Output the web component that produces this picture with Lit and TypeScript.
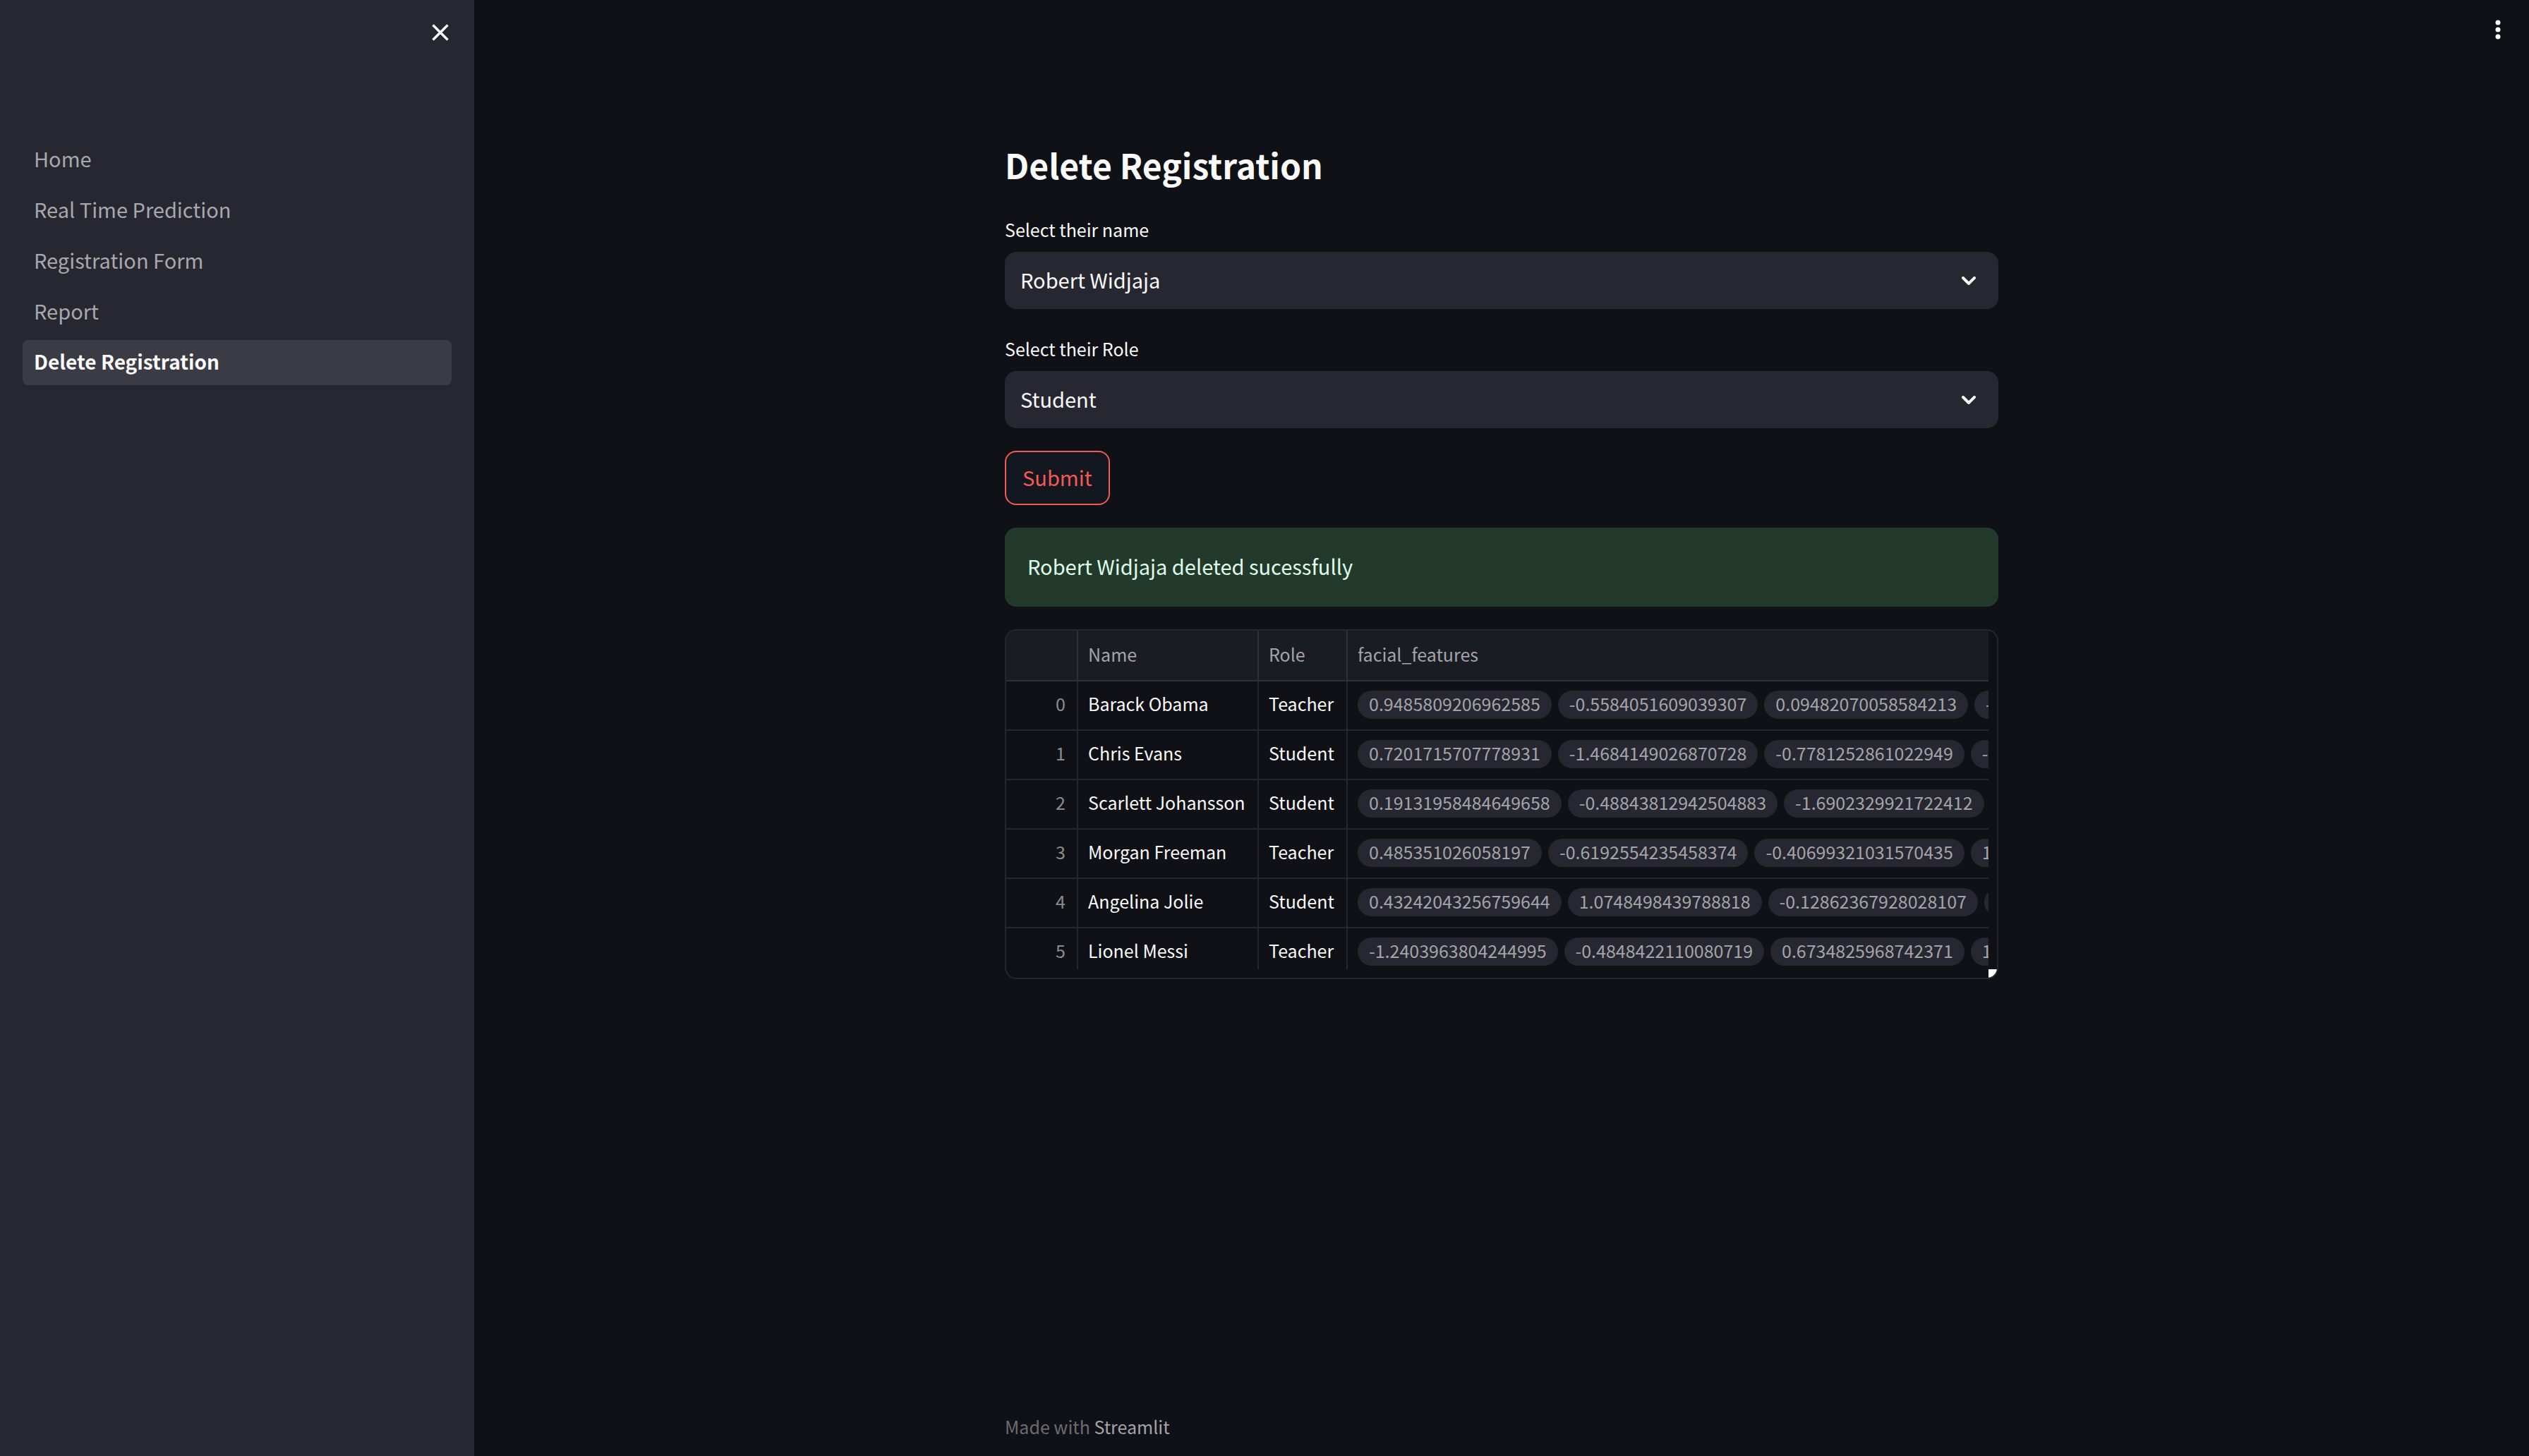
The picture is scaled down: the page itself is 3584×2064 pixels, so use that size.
import { LitElement, html, css, svg } from "lit";
import { customElement, state } from "lit/decorators.js";

interface Person {
  name: string;
  role: string;
  features: string[];
}

const PAGES = ["Home", "Real Time Prediction", "Registration Form", "Report", "Delete Registration"];

const PEOPLE: Person[] = [
  { name: "Barack Obama", role: "Teacher", features: ["0.9485809206962585", "-0.5584051609039307", "0.09482070058584213", "-"] },
  { name: "Chris Evans", role: "Student", features: ["0.7201715707778931", "-1.4684149026870728", "-0.7781252861022949", "-"] },
  { name: "Scarlett Johansson", role: "Student", features: ["0.19131958484649658", "-0.48843812942504883", "-1.6902329921722412"] },
  { name: "Morgan Freeman", role: "Teacher", features: ["0.485351026058197", "-0.6192554235458374", "-0.40699321031570435", "1"] },
  { name: "Angelina Jolie", role: "Student", features: ["0.43242043256759644", "1.0748498439788818", "-0.12862367928028107", ""] },
  { name: "Lionel Messi", role: "Teacher", features: ["-1.2403963804244995", "-0.4848422110080719", "0.6734825968742371", "1"] },
];

const chevron = svg`<path d="M2 2 L10 10 L18 2" fill="none" stroke="currentColor" stroke-width="4" stroke-linecap="round" stroke-linejoin="round"/>`;

@customElement("app-sidebar")
export class AppSidebar extends LitElement {
  static styles = css`
    :host {
      display: block;
      background: #262730;
    }
    .top {
      display: flex;
      justify-content: flex-end;
      padding: 30px 32px 132px;
    }
    .close {
      display: flex;
      padding: 0;
      border: 0;
      background: none;
      color: #fafafa;
      cursor: pointer;
    }
    .list {
      display: flex;
      flex-direction: column;
      gap: 8px;
      margin: 0;
      padding: 0 32px;
      list-style: none;
    }
    .link {
      display: block;
      padding: 0 16px 4px;
      border-radius: 8px;
      line-height: 60px;
      color: #a8a8ac;
      text-decoration: none;
      white-space: nowrap;
    }
    .link.active {
      background: #3b3b45;
      color: #fafafa;
      font-size: 28px;
      font-weight: 700;
    }
  `;

  render() {
    return html`
      <div class="top">
        <button class="close" aria-label="Close sidebar">
          <svg width="32" height="32" viewBox="0 0 32 32">
            <path d="M5.500 5.500 L26.500 26.500 M26.500 5.500 L5.500 26.500" fill="none" stroke="currentColor" stroke-width="3.500" />
          </svg>
        </button>
      </div>
      <nav aria-label="Pages">
        <ul class="list">
          ${PAGES.map(
            (page, i) => html`<li>
              <a class="link ${i === PAGES.length - 1 ? "active" : ""}" href="#">${page}</a>
            </li>`
          )}
        </ul>
      </nav>
    `;
  }
}

@customElement("app-select")
export class AppSelect extends LitElement {
  static properties = { label: {}, options: { attribute: false } };
  declare label: string;
  declare options: string[];

  static styles = css`
    :host {
      display: flex;
      flex-direction: column;
      gap: 8px;
    }
    .label {
      font-size: 25px;
      line-height: 48px;
    }
    .field {
      display: grid;
      align-items: center;
      border-radius: 16px;
      background: #262730;
    }
    .select {
      grid-area: 1 / 1;
      width: 100%;
      height: 81px;
      padding: 0 80px 4px 22px;
      border: 0;
      border-radius: 16px;
      background: none;
      color: #fafafa;
      font: inherit;
      appearance: none;
    }
    .arrow {
      grid-area: 1 / 1;
      justify-self: end;
      margin-right: 32px;
      pointer-events: none;
    }
  `;

  render() {
    return html`
      <label class="label" for="field">${this.label}</label>
      <div class="field">
        <select class="select" id="field">
          ${this.options.map((o) => html`<option>${o}</option>`)}
        </select>
        <svg class="arrow" width="20" height="12" viewBox="0 0 20 12">${chevron}</svg>
      </div>
    `;
  }
}

@customElement("people-table")
export class PeopleTable extends LitElement {
  static styles = css`
    :host {
      display: block;
      overflow: hidden;
      position: relative;
      padding: 0 12px 12px 0;
      border: 2px solid #26272d;
      border-radius: 16px;
      font-size: 25px;
    }
    .table {
      width: 100%;
      table-layout: fixed;
      border-collapse: separate;
      border-spacing: 0;
    }
    .index {
      width: 102px;
    }
    .name {
      width: 256px;
    }
    .role {
      width: 126px;
    }
    .head,
    .cell {
      box-sizing: border-box;
      height: 70px;
      padding: 13px 14px 0;
      border-right: 2px solid #26272d;
      border-bottom: 2px solid #26272d;
      overflow: hidden;
      line-height: 36px;
      text-align: left;
      vertical-align: top;
      font-weight: 400;
      white-space: nowrap;
    }
    .head {
      height: 72px;
      padding-top: 15px;
      background: #1a1c24;
      border-color: #303138;
      color: #a3a4a8;
    }
    .cell.number {
      padding-right: 16px;
      color: #8b8c90;
      text-align: right;
    }
    .head:last-child,
    .cell:last-child {
      border-right: 0;
    }
    .row:last-child .cell {
      height: 58px;
      border-bottom: 0;
    }
    .chips {
      display: flex;
      gap: 9px;
    }
    .chip {
      box-sizing: border-box;
      flex: none;
      min-width: 160px;
      padding: 0 16px 4px;
      border-radius: 20px;
      background: #262730;
      color: #a3a4a8;
    }
    .corner {
      position: absolute;
      right: 0;
      bottom: 0;
      width: 12px;
      height: 12px;
      background: #ffffff;
    }
  `;

  render() {
    return html`
      <table class="table">
        <colgroup>
          <col class="index" />
          <col class="name" />
          <col class="role" />
          <col />
        </colgroup>
        <thead>
          <tr>
            <th class="head" scope="col"></th>
            <th class="head" scope="col">Name</th>
            <th class="head" scope="col">Role</th>
            <th class="head" scope="col">facial_features</th>
          </tr>
        </thead>
        <tbody>
          ${PEOPLE.map(
            (p, i) => html`<tr class="row">
              <td class="cell number">${i}</td>
              <td class="cell">${p.name}</td>
              <td class="cell">${p.role}</td>
              <td class="cell">
                <div class="chips">${p.features.map((f) => html`<span class="chip">${f}</span>`)}</div>
              </td>
            </tr>`
          )}
        </tbody>
      </table>
      <div class="corner"></div>
    `;
  }
}

@customElement("app-root")
export class AppRoot extends LitElement {
  @state() private message = "Robert Widjaja deleted sucessfully";

  static styles = css`
    :host {
      display: grid;
      grid-template-columns: 672px minmax(0, 1fr);
      min-height: 100vh;
      background: #101116;
      color: #fafafa;
      font-family: "Noto Sans CJK SC", "Noto Sans", sans-serif;
      font-size: 29px;
      line-height: 48px;
    }
    .main {
      display: flex;
      flex-direction: column;
    }
    .toolbar {
      display: flex;
      justify-content: flex-end;
      padding: 26px 28px;
    }
    .menu {
      display: flex;
      padding: 0;
      border: 0;
      background: none;
      color: #fafafa;
      cursor: pointer;
    }
    .column {
      display: flex;
      flex: 1;
      flex-direction: column;
      box-sizing: border-box;
      width: 100%;
      max-width: 1408px;
      margin: 0 auto;
    }
    .content {
      display: flex;
      flex: 1;
      flex-direction: column;
      gap: 32px;
      padding-top: 113px;
    }
    .title {
      margin: 0;
      font-size: 48px;
      font-weight: 700;
      line-height: 72px;
    }
    .submit {
      align-self: flex-start;
      padding: 11px 23px 14px;
      border: 2px solid #f55a54;
      border-radius: 16px;
      background: #131720;
      color: #f55a54;
      font: inherit;
    }
    .alert {
      padding: 30px 32px 34px;
      border-radius: 16px;
      background: #23392b;
      color: #dffde9;
    }
    .footer {
      padding: 14px 0 18px;
      color: #6b6c70;
      font-size: 25px;
    }
    .brand {
      color: #a3a4a8;
      text-decoration: none;
    }
  `;

  render() {
    return html`
      <app-sidebar></app-sidebar>
      <div class="main">
        <header class="toolbar">
          <button class="menu" aria-label="Main menu">
            <svg width="32" height="32" viewBox="0 0 32 32" fill="currentColor">
              <circle cx="16" cy="6" r="3.500" />
              <circle cx="16" cy="16" r="3.500" />
              <circle cx="16" cy="26" r="3.500" />
            </svg>
          </button>
        </header>
        <div class="column">
          <main class="content">
            <h1 class="title">Delete Registration</h1>
            <app-select label="Select their name" .options=${["Robert Widjaja", ...PEOPLE.map((p) => p.name)]}></app-select>
            <app-select label="Select their Role" .options=${["Student", "Teacher"]}></app-select>
            <button class="submit">Submit</button>
            <div class="alert" role="status">${this.message}</div>
            <people-table></people-table>
          </main>
          <footer class="footer">Made with <a class="brand" href="#">Streamlit</a></footer>
        </div>
      </div>
    `;
  }
}
